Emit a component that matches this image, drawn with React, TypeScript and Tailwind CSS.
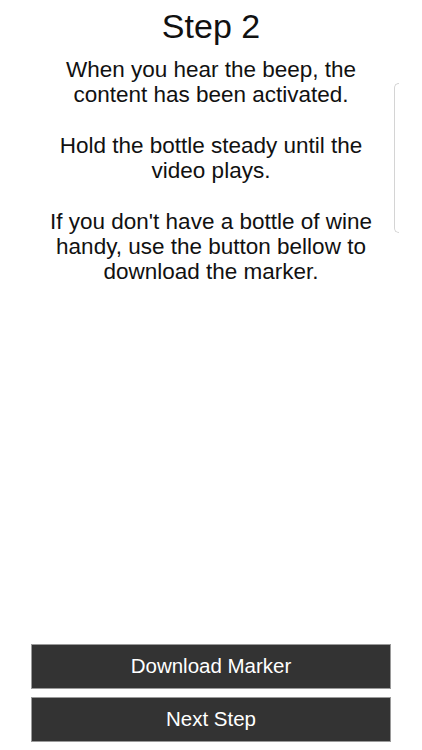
export default function App() {
  return (
    <div
      className="relative flex h-screen min-h-[750px] flex-col bg-white text-[#111]"
      style={{ fontFamily: '"Liberation Sans", Arial, sans-serif' }}
    >
      {/* Title */}
      <h1 className="pt-[6px] text-center text-[34px] leading-[40px] font-normal">Step 2</h1>

      {/* Instructions */}
      <div className="mt-[11px] text-center text-[22.5px] leading-[25.3px]">
        <p>
          When you hear the beep, the
          <br />
          content has been activated.
        </p>
        <p className="mt-[25.3px]">
          Hold the bottle steady until the
          <br />
          video plays.
        </p>
        <p className="mt-[25.3px]">
          If you don't have a bottle of wine
          <br />
          handy, use the button bellow to
          <br />
          download the marker.
        </p>
      </div>

      {/* Scroll edge indicator */}
      <div className="absolute right-[23px] top-[83px] h-[150px] w-[5px] rounded-l-[6px] border-y border-l border-[#d4d4d4]" />

      {/* Buttons */}
      <div className="mt-auto flex flex-col gap-[8px] px-[31px] pb-[8px]">
        <button className="h-[45px] border border-[#9a9a9a] bg-[#333333] text-[20.5px] text-white">
          Download Marker
        </button>
        <button className="h-[45px] border border-[#9a9a9a] bg-[#333333] text-[20.5px] text-white">
          Next Step
        </button>
      </div>
    </div>
  );
}
